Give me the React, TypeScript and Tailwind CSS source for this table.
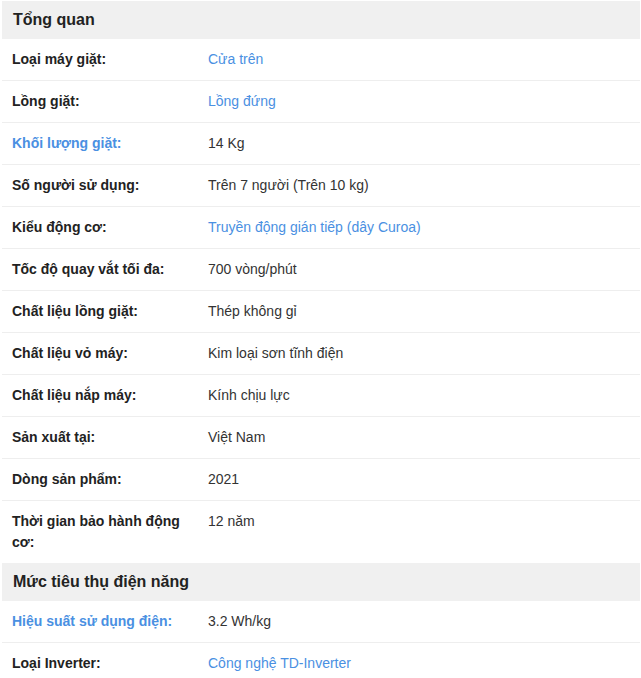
type Spec = { label: string; value: string; labelLink?: boolean; valueLink?: boolean }

const sections: { title: string; rows: Spec[] }[] = [
  {
    title: "Tổng quan",
    rows: [
      { label: "Loại máy giặt:", value: "Cửa trên", valueLink: true },
      { label: "Lồng giặt:", value: "Lồng đứng", valueLink: true },
      { label: "Khối lượng giặt:", value: "14 Kg", labelLink: true },
      { label: "Số người sử dụng:", value: "Trên 7 người (Trên 10 kg)" },
      { label: "Kiểu động cơ:", value: "Truyền động gián tiếp (dây Curoa)", valueLink: true },
      { label: "Tốc độ quay vắt tối đa:", value: "700 vòng/phút" },
      { label: "Chất liệu lồng giặt:", value: "Thép không gỉ" },
      { label: "Chất liệu vỏ máy:", value: "Kim loại sơn tĩnh điện" },
      { label: "Chất liệu nắp máy:", value: "Kính chịu lực" },
      { label: "Sản xuất tại:", value: "Việt Nam" },
      { label: "Dòng sản phẩm:", value: "2021" },
      { label: "Thời gian bảo hành động cơ:", value: "12 năm" },
    ],
  },
  {
    title: "Mức tiêu thụ điện năng",
    rows: [
      { label: "Hiệu suất sử dụng điện:", value: "3.2 Wh/kg", labelLink: true },
      { label: "Loại Inverter:", value: "Công nghệ TD-Inverter", valueLink: true },
    ],
  },
]

export default function App() {
  return (
    <div className="bg-white min-h-screen pt-px pl-[2px] pr-px font-['Liberation_Sans',Arial,sans-serif] text-[#333]">
      {sections.map(sec => (
        <section key={sec.title}>
          {/* Tiêu đề nhóm */}
          <h3 className="bg-[#f0f0f0] px-[11px] py-2 text-[16px] leading-[22px] font-bold text-[#222]">
            {sec.title}
          </h3>
          <ul>
            {sec.rows.map((r, i) => (
              <li
                key={r.label}
                className={
                  "flex text-[14px] leading-[21px] py-[10px] " +
                  (i < sec.rows.length - 1 ? "border-b border-[#eeeeee]" : "")
                }
              >
                <div className="w-[206px] shrink-0 pl-[10px] pr-[20px]">
                  <span className={r.labelLink ? "font-bold text-[#4a90e2]" : "font-bold text-[#222]"}>
                    {r.label}
                  </span>
                </div>
                <div className={r.valueLink ? "text-[#4a90e2]" : "text-[#333]"}>{r.value}</div>
              </li>
            ))}
          </ul>
        </section>
      ))}
    </div>
  )
}
